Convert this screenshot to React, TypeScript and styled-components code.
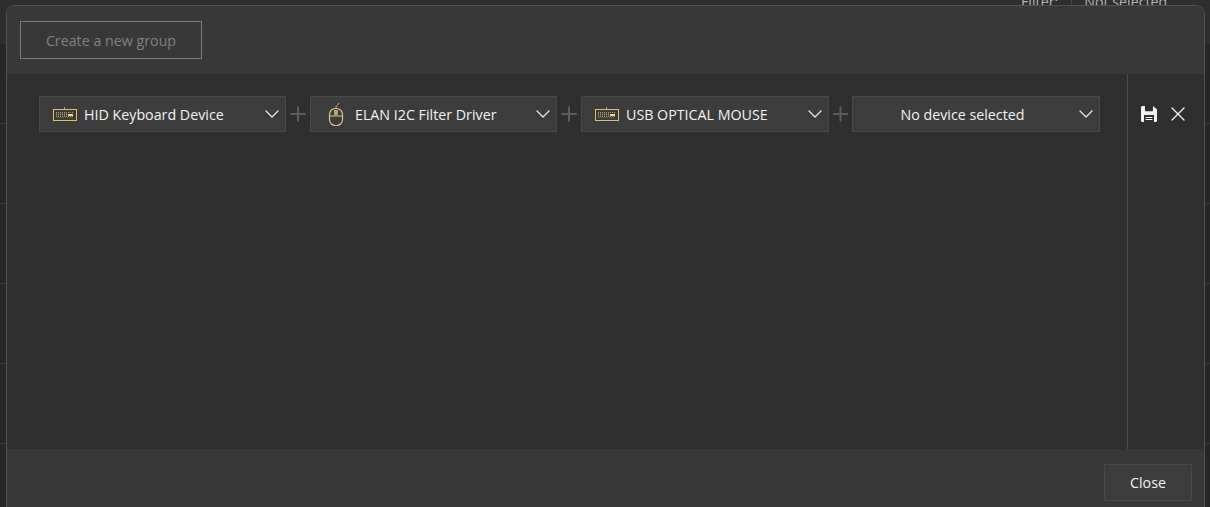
import { Fragment } from "react";
import styled, { createGlobalStyle } from "styled-components";
import { ChevronDown, Plus, X } from "lucide-react";

const GlobalStyle = createGlobalStyle`
  html, body {
    margin: 0;
    padding: 0;
    height: 100%;
    overflow: hidden;
    background-color: #262626;
    font-family: "Open Sans", "Noto Sans", sans-serif;
  }
`;

const Page = styled.div`
  position: relative;
  width: 1210px;
  height: 507px;
  overflow: hidden;
  background-color: #262626;
`;

const BackTop = styled.div`
  height: 44px;
  background-color: #2e2e2e;
`;

const BackRow = styled.div`
  height: 79px;
  border-bottom: 1px solid #3b3b3b;
`;

const FilterBar = styled.div`
  position: absolute;
  top: -8px;
  left: 1021px;
  display: flex;
  font-size: 14.25px;
  color: #b4b4b4;
`;

const FilterValue = styled.span`
  margin-left: 13px;
  padding-left: 12px;
  border-left: 1px solid #444;
`;

const Dialog = styled.div`
  position: absolute;
  left: 6px;
  top: 5px;
  width: 1199px;
  height: 502px;
  box-sizing: border-box;
  display: flex;
  flex-direction: column;
  border: 1px solid #525252;
  border-bottom: none;
  border-radius: 9px 9px 0 0;
  background-color: #2f2f2f;
  overflow: hidden;
`;

const Header = styled.div`
  height: 68px;
  box-sizing: border-box;
  padding: 15px 13px;
  background-color: #383838;
`;

const CreateButton = styled.div`
  width: 182px;
  height: 38px;
  box-sizing: border-box;
  display: flex;
  align-items: center;
  justify-content: center;
  border: 1px solid #7a7a7a;
  font-size: 14.25px;
  color: #808080;
`;

const Body = styled.div`
  flex: 1;
  display: flex;
`;

const Rows = styled.div`
  flex: 1;
  display: flex;
  align-items: flex-start;
  padding: 22px 0 0 32px;
  border-right: 1px solid #4c4c4c;
`;

const Select = styled.div<{ $w: number }>`
  width: ${(p) => p.$w}px;
  height: 36px;
  box-sizing: border-box;
  display: flex;
  align-items: center;
  border: 1px solid #484848;
  background-color: #3c3c3c;
  font-size: 14.25px;
  color: #f2f2f2;
  flex-shrink: 0;
`;

const IconSlot = styled.span`
  width: 24px;
  margin-left: 13px;
  display: flex;
  justify-content: center;
  flex-shrink: 0;
`;

const SelectText = styled.span<{ $center?: boolean }>`
  flex: 1;
  margin-left: ${(p) => (p.$center ? "0" : "7px")};
  padding-right: ${(p) => (p.$center ? "2px" : "0")};
  text-align: ${(p) => (p.$center ? "center" : "left")};
  white-space: nowrap;
`;

const Chevron = styled(ChevronDown)`
  flex-shrink: 0;
  margin: -1px 1px 0 0;
  color: #e6e6e6;
`;

const Joiner = styled.div<{ $w: number }>`
  width: ${(p) => p.$w}px;
  height: 36px;
  display: flex;
  justify-content: center;
  align-items: center;
  flex-shrink: 0;
  color: #5c5c5c;
`;

const Actions = styled.div`
  width: 76px;
  height: 24px;
  margin-top: 28px;
  display: flex;
  align-items: center;
  gap: 9px;
  padding-left: 13px;
  box-sizing: border-box;
  color: #f2f2f2;
`;

const Footer = styled.div`
  height: 58px;
  box-sizing: border-box;
  display: flex;
  justify-content: flex-end;
  padding: 15px 12px 0 0;
  background-color: #383838;
`;

const CloseButton = styled.div`
  width: 88px;
  height: 37px;
  box-sizing: border-box;
  display: flex;
  align-items: center;
  justify-content: center;
  border: 1px solid #484848;
  background-color: #3c3c3c;
  font-size: 14.25px;
  color: #f2f2f2;
`;

const KeyboardIcon = () => (
  <svg width="24" height="16" viewBox="0 0 24 16" fill="none">
    <path d="M11.5 3.5V1" stroke="#b9a565" />
    <rect x="0.5" y="3.5" width="23" height="11" fill="#3f3b30" stroke="#d4bf7c" />
    <path d="M3 6.5H21M3 8.5H14M3 10.5H21" stroke="#a09673" strokeDasharray="1 1" />
    <path d="M3 7.5H14M3 9.5H14M4 11.5H20" stroke="#6d6753" strokeDasharray="1 1" />
    <rect x="15" y="8" width="5" height="2" fill="#efd98d" />
  </svg>
);

const MouseIcon = () => (
  <svg width="16" height="24" viewBox="0 0 16 24" fill="none">
    <path d="M8 6.5V5C8 3.5 10 3.5 11 1" stroke="#c9b46f" />
    <rect x="1.5" y="6.5" width="13" height="17" rx="6" stroke="#dcc67e" strokeWidth="1.2" />
    <path d="M1.5 14H14.5" stroke="#dcc67e" />
    <rect x="6.5" y="8.5" width="3" height="4" fill="#b9a565" stroke="#dcc67e" strokeWidth="0.6" />
  </svg>
);

const SaveIcon = () => (
  <svg width="16" height="16" viewBox="0 0 16 16">
    <path
      fillRule="evenodd"
      fill="#f2f2f2"
      d="M0 1.5C0 .7.7 0 1.5 0H12l4 3.5v11c0 .8-.7 1.5-1.5 1.5h-13C.7 16 0 15.3 0 14.5zM4 0v4.5c0 .5.3.8.8.8h6.4c.5 0 .8-.3.8-.8V0zM3 9v7h10V9zM4.5 11h7v1h-7zM4.5 13h7v1h-7z"
    />
  </svg>
);

const devices = [
  { name: "HID Keyboard Device", icon: <KeyboardIcon />, w: 247, gap: 24 },
  { name: "ELAN I2C Filter Driver", icon: <MouseIcon />, w: 247, gap: 24 },
  { name: "USB OPTICAL MOUSE", icon: <KeyboardIcon />, w: 248, gap: 23 },
];

export default function App() {
  return (
    <Page>
      <GlobalStyle />
      <BackTop />
      {[0, 1, 2, 3, 4].map((i) => (
        <BackRow key={i} />
      ))}
      <FilterBar>
        <span>Filter:</span>
        <FilterValue>Not selected</FilterValue>
      </FilterBar>
      <Dialog>
        <Header>
          <CreateButton>Create a new group</CreateButton>
        </Header>
        <Body>
          <Rows>
            {devices.map((d) => (
              <Fragment key={d.name}>
                <Select $w={d.w}>
                  <IconSlot>{d.icon}</IconSlot>
                  <SelectText>{d.name}</SelectText>
                  <Chevron size={24} strokeWidth={1.3} />
                </Select>
                <Joiner $w={d.gap}>
                  <Plus size={24} strokeWidth={2} />
                </Joiner>
              </Fragment>
            ))}
            <Select $w={248}>
              <SelectText $center>No device selected</SelectText>
              <Chevron size={24} strokeWidth={1.3} />
            </Select>
          </Rows>
          <Actions>
            <SaveIcon />
            <X size={24} strokeWidth={1.3} />
          </Actions>
        </Body>
        <Footer>
          <CloseButton>Close</CloseButton>
        </Footer>
      </Dialog>
    </Page>
  );
}
